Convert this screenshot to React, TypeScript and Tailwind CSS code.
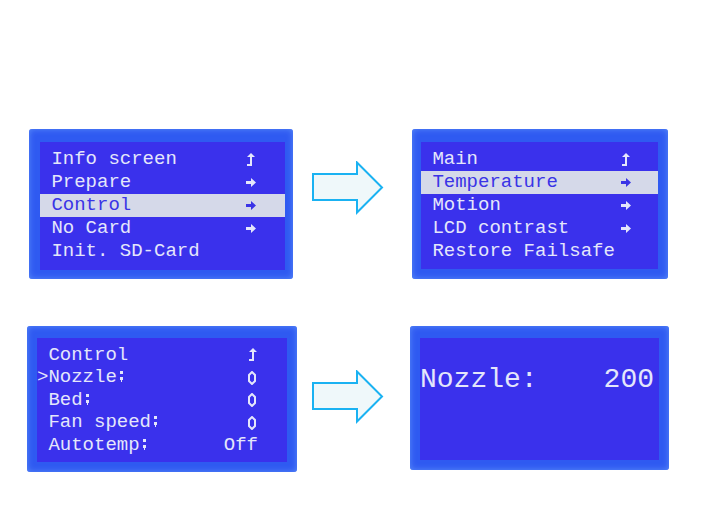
import type { ReactNode } from 'react';

const mono = { fontFamily: '"Liberation Mono", "DejaVu Sans Mono", monospace' };

function UpIcon() {
  return (
    <svg width="12" height="16" viewBox="0 0 12 16" className="block">
      <path d="M6 1 L2 5 H5 V12 H2 V14 H7 V5 H10 Z" fill="currentColor" />
    </svg>
  );
}

function RightIcon() {
  return (
    <svg width="11" height="9" viewBox="0 0 11 9" className="block">
      <path d="M0 3 H5 V0 L10 4.5 L5 9 V6 H0 Z" fill="currentColor" />
    </svg>
  );
}

function EditMark() {
  return (
    <svg width="11" height="16" viewBox="0 0 11 16" className="inline-block align-[-2px]">
      <rect x="3" y="3" width="3" height="3" fill="currentColor" />
      <rect x="3" y="9" width="3" height="3" fill="currentColor" />
      <rect x="4" y="12" width="1" height="2" fill="currentColor" />
    </svg>
  );
}

function ZeroMark() {
  return (
    <svg width="8" height="14" viewBox="0 0 8 14" className="block">
      <path d="M4 1 L7 4 V10 L4 13 L1 10 V4 Z" fill="none" stroke="currentColor" strokeWidth="2" />
    </svg>
  );
}

function BigArrow() {
  return (
    <svg width="72" height="54" viewBox="0 0 72 54" className="block">
      <polygon
        points="1,13 45,13 45,1.5 70,26.5 45,51.5 45,39 1,39"
        fill="#eff8fa"
        stroke="#1ab2f2"
        strokeWidth="2"
      />
    </svg>
  );
}

function Row({ children, right, active, h = 'h-[23px]' }: { children: ReactNode; right?: ReactNode; active?: boolean; h?: string }) {
  return (
    <div
      className={`flex items-center justify-between ${h} ${
        active ? 'bg-[#d5d9e9] text-[#3a34e6]' : 'text-[#e4e6fb]'
      }`}
    >
      <span className="whitespace-pre leading-none">{children}</span>
      {right}
    </div>
  );
}

export default function App() {
  return (
    <div className="w-[713px] h-[506px] bg-white overflow-hidden text-[19px]" style={mono}>
      <div className="flex items-start pt-[129px]">
        <div className="ml-[29px] w-[264px] h-[150px] bg-[#2f5af1] rounded-[3px] pl-[11px] pr-[8px] pt-[13px] pb-[9px] shadow-[inset_0_0_6px_#5a8cf8]">
          <div className="h-full bg-[#3a31ec] pt-[6px] pl-[-1px]">
            <Row right={<span className="mr-[28px] text-[#e4e6fb]"><UpIcon /></span>}>{' Info screen'}</Row>
            <Row right={<span className="mr-[28px]"><RightIcon /></span>}>{' Prepare'}</Row>
            <Row active right={<span className="mr-[28px]"><RightIcon /></span>}>{' Control'}</Row>
            <Row right={<span className="mr-[28px]"><RightIcon /></span>}>{' No Card'}</Row>
            <Row>{' Init. SD-Card'}</Row>
          </div>
        </div>
        <div className="ml-[19px] mt-[32px]">
          <BigArrow />
        </div>
        <div className="ml-[28px] w-[256px] h-[150px] bg-[#2f5af1] rounded-[3px] pl-[9px] pr-[10px] pt-[13px] pb-[10px] shadow-[inset_0_0_6px_#5a8cf8]">
          <div className="h-full bg-[#3a31ec] pt-[6px]">
            <Row right={<span className="mr-[26px]"><UpIcon /></span>}>{' Main'}</Row>
            <Row active right={<span className="mr-[26px]"><RightIcon /></span>}>{' Temperature'}</Row>
            <Row right={<span className="mr-[26px]"><RightIcon /></span>}>{' Motion'}</Row>
            <Row right={<span className="mr-[26px]"><RightIcon /></span>}>{' LCD contrast'}</Row>
            <Row>{' Restore Failsafe'}</Row>
          </div>
        </div>
      </div>

      <div className="flex items-start mt-[47px]">
        <div className="ml-[27px] w-[270px] h-[146px] bg-[#2f5af1] rounded-[3px] pl-[10px] pr-[10px] pt-[12px] pb-[10px] shadow-[inset_0_0_6px_#5a8cf8]">
          <div className="h-full bg-[#3a31ec] pt-[6px]">
            <Row h="h-[22.5px]" right={<span className="mr-[28px] text-[#e4e6fb]"><UpIcon /></span>}>{' Control'}</Row>
            <Row h="h-[22.5px]" right={<span className="mr-[31px]"><ZeroMark /></span>}>
              {'>Nozzle'}
              <EditMark />
            </Row>
            <Row h="h-[22.5px]" right={<span className="mr-[31px]"><ZeroMark /></span>}>
              {' Bed'}
              <EditMark />
            </Row>
            <Row h="h-[22.5px]" right={<span className="mr-[31px]"><ZeroMark /></span>}>
              {' Fan speed'}
              <EditMark />
            </Row>
            <Row h="h-[22.5px]" right={<span className="mr-[29px] leading-none">Off</span>}>
              {' Autotemp'}
              <EditMark />
            </Row>
          </div>
        </div>
        <div className="ml-[15px] mt-[44px]">
          <BigArrow />
        </div>
        <div className="ml-[26px] w-[259px] h-[144px] bg-[#2f5af1] rounded-[3px] px-[10px] pt-[12px] pb-[10px] shadow-[inset_0_0_6px_#5a8cf8]">
          <div className="h-full bg-[#3a31ec] pt-[28px]">
            <div className="flex justify-between items-center h-[28px] text-[28px] leading-none text-[#e4e6fb] pr-[5px]">
              <span>Nozzle:</span>
              <span>200</span>
            </div>
          </div>
        </div>
      </div>
    </div>
  );
}
